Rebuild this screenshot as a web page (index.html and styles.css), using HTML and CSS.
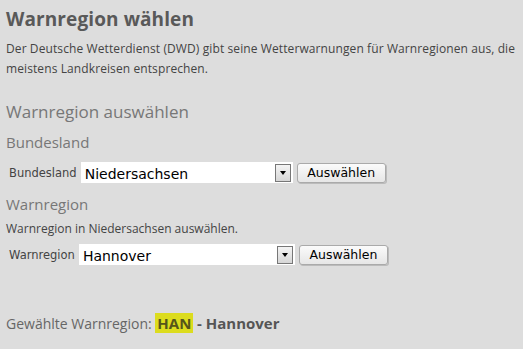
FILE: index.html
```html
<!doctype html>
<html>
<head>
<meta charset="utf-8">
<title>Warnregion wählen</title>
<link rel="stylesheet" href="styles.css">
</head>
<body>
<div id="page">
  <h1 class="title">Warnregion wählen</h1>
  <p class="intro">Der Deutsche Wetterdienst (DWD) gibt seine Wetterwarnungen für Warnregionen aus, die meistens Landkreisen entsprechen.</p>

  <h2 class="sub">Warnregion auswählen</h2>

  <h3 class="part">Bundesland</h3>
  <form class="row">
    <label class="lbl">Bundesland</label>
    <div class="sel sel-land">
      <span class="sel-txt">Niedersachsen</span>
      <span class="sel-btn"><i></i></span>
    </div>
    <button type="button" class="btn">Auswählen</button>
  </form>

  <h3 class="part">Warnregion</h3>
  <p class="hint">Warnregion in Niedersachsen auswählen.</p>
  <form class="row row-tight">
    <label class="lbl">Warnregion</label>
    <div class="sel sel-region">
      <span class="sel-txt">Hannover</span>
      <span class="sel-btn"><i></i></span>
    </div>
    <button type="button" class="btn">Auswählen</button>
  </form>

  <p class="result">Gewählte Warnregion: <span class="code">HAN</span> <b>- Hannover</b></p>
</div>
</body>
</html>
```

FILE: styles.css
```css
*{ margin:0; padding:0; box-sizing:border-box}
body{ background:#dddddd; font-family:"Open Sans","Noto Sans",sans-serif; color:#555}
#page{ padding:6px 6px 0 6px}
.title{ font-size:19px; font-weight:700; color:#595959; line-height:26px; letter-spacing:0.1px}
.intro{ font-size:12px; color:#444; line-height:20px; margin-top:7px; letter-spacing:0.1px}
.sub{ font-size:17px; font-weight:400; color:#777; line-height:22px; margin-top:22px}
.part{ font-size:15px; font-weight:400; color:#777; line-height:20px; margin-top:9px}
.row + .part{ margin-top:11px}
.row{ display:flex; align-items:center; margin-top:10px; padding-left:3px}
.row-tight{ margin-top:6px}
.lbl{ font-family:"DejaVu Sans",sans-serif; font-size:11.5px; color:#444; margin-right:4px}
.sel{ display:flex; align-items:center; background:#fff; height:21px; padding-left:4px}
.sel-land{ width:212px}
.sel-region{ width:216px}
.sel-txt{ flex:1; font-family:"DejaVu Sans",sans-serif; font-size:14px; color:#000; padding-top:2px}
.sel-btn{ width:16px; height:18px; border:1px solid #777; background:linear-gradient(#f4f4f4,#d6d6d6); margin-right:2px; display:flex; align-items:center; justify-content:center}
.sel-btn i{ width:0; height:0; border-left:3px solid transparent; border-right:3px solid transparent; border-top:4px solid #000}
.btn{ margin-left:4px; width:89px; height:20px; border:1px solid #aaa; border-radius:3px; background:linear-gradient(#fbfbfb,#e6e6e6); font-family:"DejaVu Sans",sans-serif; font-size:12.5px; color:#000; box-shadow:1px 1px 0 #bbb}
.part + .hint{ margin-top:6px}
.hint{ font-size:12px; color:#444; line-height:18px}
.result{ font-size:14px; color:#666; margin-top:48px}
.code{ background:#dcdc1e; color:#55551a; font-weight:700; font-size:15px; padding:0 2px}
.result b{ color:#555; font-size:15px}
```
